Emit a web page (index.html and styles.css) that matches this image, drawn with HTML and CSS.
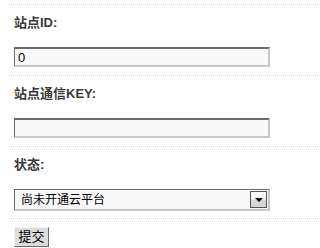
FILE: index.html
```html
<!DOCTYPE html>
<html lang="zh-CN">
<head>
<meta charset="utf-8">
<title>设置</title>
<link rel="stylesheet" href="styles.css">
</head>
<body>
<form class="form">
  <div class="row">
    <div class="label">站点ID:</div>
    <input class="field" type="text" value="0">
  </div>
  <div class="row">
    <div class="label">站点通信KEY:</div>
    <input class="field" type="text" value="">
  </div>
  <div class="row row-select">
    <div class="label">状态:</div>
    <div class="select">
      <span class="select-text">尚未开通云平台</span>
      <span class="select-arrow"><span class="tri"></span></span>
    </div>
  </div>
  <div class="row row-submit">
    <button class="btn" type="button">提交</button>
  </div>
</form>
</body>
</html>
```
FILE: styles.css
```css
html, body {
  margin: 0;
  padding: 0;
  background: #fff;
}
body {
  font-family: "Liberation Sans", "Noto Sans CJK SC", sans-serif;
  color: #000;
}
.form {
  margin: 0;
  padding: 4px 0 0 9px;
}
.row {
  border-top: 1px dotted #c3d9ea;
  padding: 10px 0 8px 5px;
}
.label {
  font-size: 13px;
  font-weight: bold;
  line-height: 16px;
  color: #3a3a3a;
  margin-bottom: 16px;
}
.field {
  display: block;
  box-sizing: border-box;
  width: 256px;
  height: 20px;
  margin: 0;
  padding: 0 3px;
  border-style: solid;
  border-width: 2px 2px 2px 1px;
  border-color: #6a6a6a #c8c8c8 #c8c8c8 #6a6a6a;
  background: #f8f8f8;
  font-family: "Liberation Sans", "Noto Sans CJK SC", sans-serif;
  font-size: 13px;
  color: #000;
  outline: none;
}
.row-select {
  padding-bottom: 7px;
}
.select {
  box-sizing: border-box;
  width: 256px;
  height: 22px;
  display: flex;
  align-items: center;
  justify-content: space-between;
  border-style: solid;
  border-width: 1px 2px 2px 1px;
  border-color: #6a6a6a #c8c8c8 #c8c8c8 #6a6a6a;
  background: #f8f8f8;
  padding: 0 1px 0 6px;
}
.select-text {
  font-size: 12px;
  line-height: 16px;
  color: #000;
}
.select-arrow {
  box-sizing: border-box;
  width: 17px;
  height: 17px;
  border: 1px solid #555;
  background: linear-gradient(#fafafa 0%, #f4f4f4 45%, #d8d8d8 55%, #d4d4d4 100%);
  display: flex;
  align-items: center;
  justify-content: center;
}
.tri {
  width: 0;
  height: 0;
  border-left: 4px solid transparent;
  border-right: 4px solid transparent;
  border-top: 4px solid #000;
  margin-top: 1px;
}
.row-submit {
  padding: 8px 0 0 5px;
}
.btn {
  display: block;
  box-sizing: border-box;
  width: 35px;
  height: 20px;
  margin: 0;
  padding: 0;
  border-style: solid;
  border-width: 1px;
  border-color: #f4f4f4 #6a6a6a #6a6a6a #f4f4f4;
  background: #dcdcdc;
  font-family: "Liberation Sans", "Noto Sans CJK SC", sans-serif;
  font-size: 13px;
  line-height: 16px;
  color: #000;
}
```
